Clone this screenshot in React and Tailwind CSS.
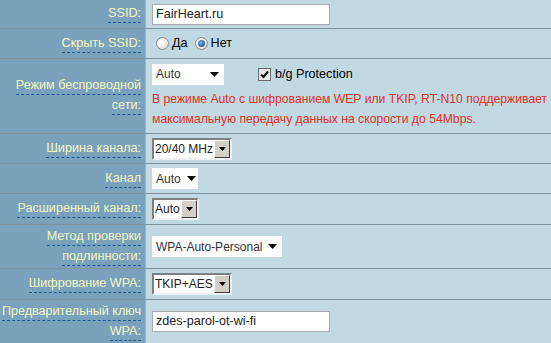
const FONT = { fontFamily: '"Liberation Sans", Arial, sans-serif' };

function Label({ lines }) {
  return (
    <div className="flex flex-col items-end justify-center border-r border-[#9db6c4] bg-[#7ba2bc] pr-[4px] text-right text-[12.6px] text-[#f2f7c0]">
      {lines.map((l) => (
        <span key={l} className="whitespace-nowrap border-b border-dashed border-[#1c5a9a] leading-[17px] [&+span]:mt-[2px]">
          {l}
        </span>
      ))}
    </div>
  );
}

function Row({ label, h, children }) {
  return (
    <div className={`grid grid-cols-[146px_1fr] border-b border-[#7d9299] ${h}`}>
      <Label lines={label} />
      <div className="flex flex-col justify-center bg-[#c1d9e3] pl-[6px]">{children}</div>
    </div>
  );
}

function TextInput({ value }) {
  return (
    <div className="flex h-[21px] w-[178px] items-center border border-[#a5abb0] bg-white pl-[3px] text-[12.6px] text-[#222]">
      {value}
    </div>
  );
}

function Arrow() {
  return (
    <svg width="9" height="5" viewBox="0 0 9 5" className="shrink-0">
      <path d="M0 0h9L4.5 5z" fill="#000" />
    </svg>
  );
}

function FlatSelect({ value, w }) {
  return (
    <div className={`flex h-[21px] items-center justify-between gap-[6px] whitespace-nowrap bg-white pl-[4px] pr-[5px] text-[12px] text-[#333] ${w}`}>
      <span>{value}</span>
      <Arrow />
    </div>
  );
}

function ClassicSelect({ value, w }) {
  return (
    <div
      className={`flex h-[22px] items-center border-2 border-t-[#808080] border-l-[#808080] border-r-[#f0f0f0] border-b-[#f0f0f0] bg-white text-[12px] text-[#222] ${w}`}
    >
      <span className="flex-1 overflow-hidden whitespace-nowrap pl-[1px]">{value}</span>
      <div className="flex h-[18px] w-[16px] shrink-0 items-center justify-center border border-t-[#fff] border-l-[#fff] border-r-[#404040] border-b-[#404040] bg-[#d4d0c8]">
        <svg width="7" height="4" viewBox="0 0 7 4">
          <path d="M0 0h7L3.5 4z" fill="#000" />
        </svg>
      </div>
    </div>
  );
}

function Radio({ checked }) {
  return (
    <span className="flex h-[13px] w-[13px] items-center justify-center rounded-full border border-[#8a8a8a] bg-[radial-gradient(circle_at_35%_35%,#ffffff,#d8d8d8)]">
      {checked && <span className="h-[7px] w-[7px] rounded-full bg-[radial-gradient(circle_at_40%_40%,#6fb2e6,#0b3f75)]" />}
    </span>
  );
}

export default function App() {
  return (
    <div className="h-[343px] w-[551px] overflow-hidden bg-[#c1d9e3]" style={FONT}>
      <Row label={["SSID:"]} h="h-[29px]">
        <TextInput value="FairHeart.ru" />
      </Row>
      <Row label={["Скрыть SSID:"]} h="h-[30px]">
        <div className="flex items-center gap-[3px] pl-[4px] text-[12.6px] text-black">
          <Radio />
          <span className="mr-[4px]">Да</span>
          <Radio checked />
          <span>Нет</span>
        </div>
      </Row>
      <Row label={["Режим беспроводной", "сети:"]} h="h-[75px]">
        <div className="flex items-center">
          <FlatSelect value="Auto" w="w-[72px]" />
          <span className="ml-[34px] flex h-[13px] w-[13px] items-center justify-center border border-[#6a6a6a] bg-[#e8e8e8]">
            <svg width="9" height="9" viewBox="0 0 9 9">
              <path d="M1 4.5l2.5 2.5L8 1.5" stroke="#000" strokeWidth="2" fill="none" />
            </svg>
          </span>
          <span className="ml-[4px] text-[12.6px] text-black">b/g Protection</span>
        </div>
        <p className="mt-[4px] whitespace-nowrap text-[12.2px] leading-[20px] text-[#e0301e]">
          В режиме Auto с шифрованием WEP или TKIP, RT-N10 поддерживает
          <br />
          максимальную передачу данных на скорости до 54Mbps.
        </p>
      </Row>
      <Row label={["Ширина канала:"]} h="h-[30px]">
        <ClassicSelect value="20/40 MHz" w="w-[80px]" />
      </Row>
      <Row label={["Канал"]} h="h-[30px]">
        <FlatSelect value="Auto" w="w-[46px]" />
      </Row>
      <Row label={["Расширенный канал:"]} h="h-[31px]">
        <ClassicSelect value="Auto" w="w-[47px]" />
      </Row>
      <Row label={["Метод проверки", "подлинности:"]} h="h-[44px]">
        <FlatSelect value="WPA-Auto-Personal" w="w-[130px]" />
      </Row>
      <Row label={["Шифрование WPA:"]} h="h-[31px]">
        <ClassicSelect value="TKIP+AES" w="w-[80px]" />
      </Row>
      <Row label={["Предварительный ключ", "WPA:"]} h="h-[44px]">
        <TextInput value="zdes-parol-ot-wi-fi" />
      </Row>
    </div>
  );
}
